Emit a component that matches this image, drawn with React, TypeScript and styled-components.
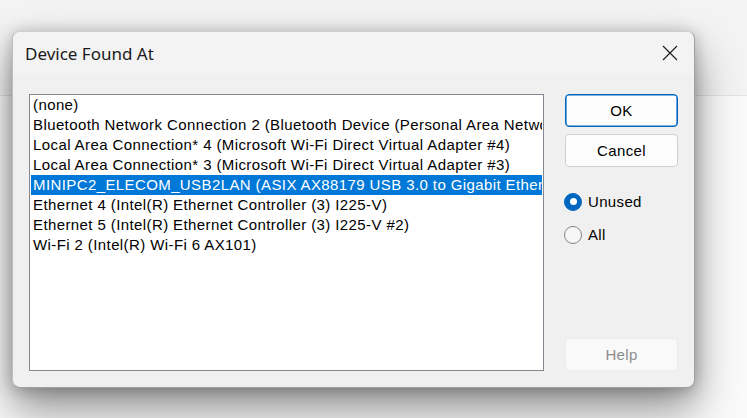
import styled, { createGlobalStyle } from "styled-components";

const GlobalStyle = createGlobalStyle`
  html, body {
    margin: 0;
    padding: 0;
    overflow: hidden;
  }
  body {
    font-family: "Liberation Sans", Arial, sans-serif;
  }
`;

const Desktop = styled.div`
  position: relative;
  width: 747px;
  height: 418px;
  background: #fafafa;
  overflow: hidden;
`;

const BackWindowBand = styled.div`
  height: 95px;
  background: #f3f3f3;
  border-bottom: 1px solid #e3e3e3;
`;

const Dialog = styled.div`
  position: absolute;
  left: 12px;
  top: 31px;
  width: 683px;
  height: 357px;
  box-sizing: border-box;
  display: flex;
  flex-direction: column;
  background: #f0f0f0;
  border: 1px solid #a0a0a0;
  border-top-color: #cdcdcd;
  border-left-color: #bdbdbd;
  border-radius: 8px;
  overflow: hidden;
  box-shadow: 0 22px 44px rgba(0, 0, 0, 0.42), 0 2px 16px rgba(0, 0, 0, 0.26);
`;

const TitleBar = styled.div`
  height: 43px;
  flex: none;
  display: flex;
  align-items: center;
  justify-content: space-between;
  padding: 0 16px 0 12px;
  background: #f3f3f3;
`;

const Title = styled.div`
  font-family: "Noto Sans", "Open Sans", sans-serif;
  font-size: 17px;
  color: #1a1a1a;
  margin-top: -1px;
`;

const CloseButton = styled.div`
  width: 16px;
  height: 16px;
  display: flex;
  align-items: center;
  justify-content: center;
  margin-top: -2px;
`;

const Body = styled.div`
  flex: 1;
  display: flex;
  gap: 21px;
  padding: 19px 16px 16px 16px;
`;

const ListBox = styled.div`
  width: 515px;
  height: 277px;
  box-sizing: border-box;
  border: 1px solid #828790;
  background: #ffffff;
  padding: 0 1px;
  overflow: hidden;
`;

const Row = styled.div<{ $selected?: boolean }>`
  height: 20px;
  line-height: 20px;
  padding-left: 2px;
  white-space: nowrap;
  overflow: hidden;
  font-size: 15px;
  letter-spacing: 0.4px;
  color: ${(p) => (p.$selected ? "#ffffff" : "#000000")};
  background: ${(p) => (p.$selected ? "#0078d7" : "transparent")};
`;

const Side = styled.div`
  width: 113px;
  display: flex;
  flex-direction: column;
`;

const Button = styled.div<{ $default?: boolean; $disabled?: boolean }>`
  height: 33px;
  box-sizing: border-box;
  display: flex;
  align-items: center;
  justify-content: center;
  border-radius: 4px;
  font-size: 15px;
  letter-spacing: 0.35px;
  color: ${(p) => (p.$disabled ? "#8c8c8c" : "#000000")};
  background: ${(p) => (p.$disabled ? "#f9f9f9" : "#fdfdfd")};
  border: 1px solid
    ${(p) => (p.$default ? "#0067c0" : p.$disabled ? "#ececec" : "#d0d0d0")};
  box-shadow: ${(p) => (p.$default ? "inset 0 0 0 0.6px #0067c0" : "none")};
`;

const Radios = styled.div`
  display: flex;
  flex-direction: column;
  gap: 14px;
  margin-top: 25px;
  margin-left: -1px;
`;

const RadioRow = styled.div`
  display: flex;
  align-items: center;
  gap: 6px;
  height: 19px;
  font-size: 15px;
  letter-spacing: 0.35px;
  color: #000;
`;

const RadioDot = styled.div<{ $checked?: boolean }>`
  width: 18px;
  height: 18px;
  box-sizing: border-box;
  border-radius: 50%;
  display: flex;
  align-items: center;
  justify-content: center;
  background: ${(p) => (p.$checked ? "#0067c0" : "#f7f7f7")};
  border: 1px solid ${(p) => (p.$checked ? "#0067c0" : "#858585")};

  &::after {
    content: "";
    display: ${(p) => (p.$checked ? "block" : "none")};
    width: 7px;
    height: 7px;
    border-radius: 50%;
    background: #ffffff;
  }
`;

const Spacer = styled.div`
  flex: 1;
`;

const items = [
  "(none)",
  "Bluetooth Network Connection 2 (Bluetooth Device (Personal Area Network))",
  "Local Area Connection* 4 (Microsoft Wi-Fi Direct Virtual Adapter #4)",
  "Local Area Connection* 3 (Microsoft Wi-Fi Direct Virtual Adapter #3)",
  "MINIPC2_ELECOM_USB2LAN (ASIX AX88179 USB 3.0 to Gigabit Ethernet Adapter)",
  "Ethernet 4 (Intel(R) Ethernet Controller (3) I225-V)",
  "Ethernet 5 (Intel(R) Ethernet Controller (3) I225-V #2)",
  "Wi-Fi 2 (Intel(R) Wi-Fi 6 AX101)",
];

export default function App() {
  return (
    <>
      <GlobalStyle />
      <Desktop>
        <BackWindowBand />
        <Dialog>
          <TitleBar>
            <Title>Device Found At</Title>
            <CloseButton>
              <svg width="16" height="16" viewBox="0 0 16 16">
                <path d="M1 1 L15 15 M15 1 L1 15" stroke="#1a1a1a" strokeWidth="1.1" />
              </svg>
            </CloseButton>
          </TitleBar>
          <Body>
            <ListBox>
              {items.map((t, i) => (
                <Row key={t} $selected={i === 4}>
                  {t}
                </Row>
              ))}
            </ListBox>
            <Side>
              <Button $default>OK</Button>
              <Button style={{ marginTop: 7 }}>Cancel</Button>
              <Radios>
                <RadioRow>
                  <RadioDot $checked />
                  Unused
                </RadioRow>
                <RadioRow>
                  <RadioDot />
                  All
                </RadioRow>
              </Radios>
              <Spacer />
              <Button $disabled>Help</Button>
            </Side>
          </Body>
        </Dialog>
      </Desktop>
    </>
  );
}
